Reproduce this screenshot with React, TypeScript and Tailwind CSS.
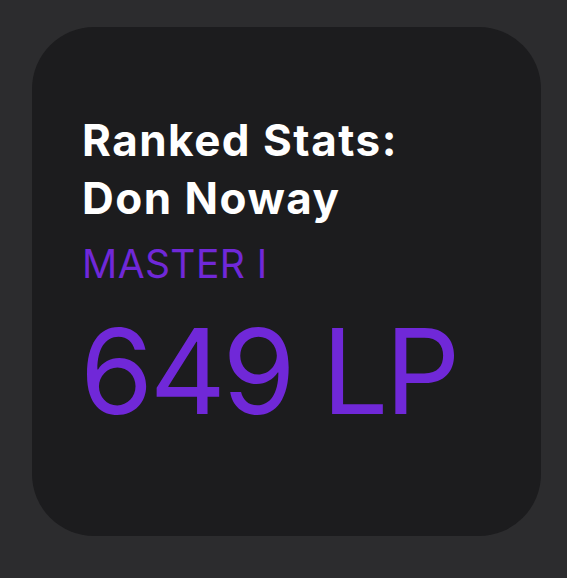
import React from "react";

const RankedCard = () => {
    return (
        <div className="w-[509px] h-[509px] rounded-[62px] bg-[#1c1c1e] pt-[84px] pl-[50px] flex flex-col">
            <h1 className="text-[44px] leading-[58px] font-bold text-white tracking-[1.5px]">
                Ranked Stats:
                <br />
                Don Noway
            </h1>
            <div className="mt-[18px] text-[39px] leading-[38px] text-[#7028d8] tracking-[0.4px]">MASTER I</div>
            <div className="mt-[28px] -ml-[2px] text-[118px] leading-[121px] text-[#7028d8] tracking-[-3.5px]">649 LP</div>
        </div>
    );
};

export default function App() {
    return (
        <div
            className="min-h-screen w-full bg-[#2c2c2e] pt-[27px] pl-[32px]"
            style={{ fontFamily: "Inter, 'Noto Sans', sans-serif" }}
        >
            <RankedCard />
        </div>
    );
}
